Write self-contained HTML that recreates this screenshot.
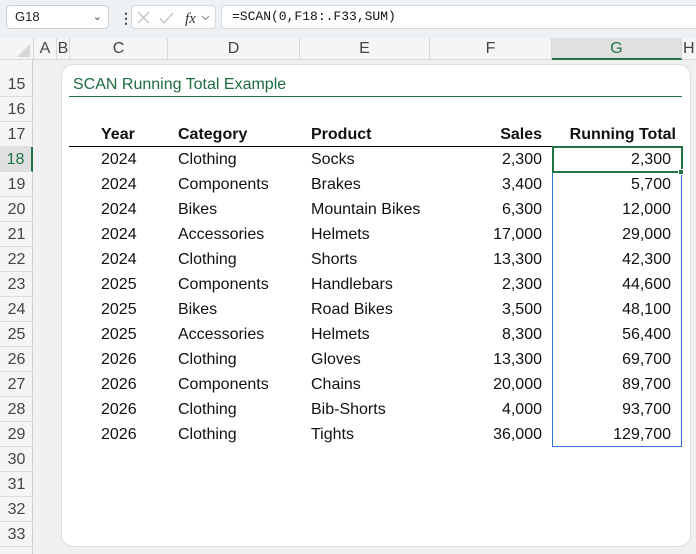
<!DOCTYPE html>
<html><head><style>
*{margin:0;padding:0;box-sizing:border-box}
body{width:696px;height:554px;background:#f0f0f0;font-family:"Liberation Sans",sans-serif;position:relative;overflow:hidden}
.a{position:absolute}
.t{position:absolute;font-size:16px;color:#111;line-height:25px;white-space:nowrap}
.r{text-align:right}
.b{font-weight:bold}
.rh{position:absolute;left:0;width:33px;height:25px;line-height:25px;text-align:center;font-size:16px;color:#444;border-bottom:1px solid #dcdcdc}
.ch{position:absolute;top:38px;height:22px;line-height:22px;text-align:center;font-size:16px;color:#444;border-right:1px solid #d8d8d8}
</style></head><body>
<div class="a" style="left:0;top:0;width:696px;height:37px;background:#eef1f4"></div>
<div class="a" style="left:6px;top:5px;width:103px;height:24px;background:#fff;border:1px solid #d0d0d0;border-radius:4px;font-size:13px;line-height:22px;padding-left:8px;color:#222">G18<span style="position:absolute;right:6px;top:0;font-size:11px;color:#444">&#8964;</span></div>
<div class="a" style="left:119px;top:10px;font-size:14px;color:#444;font-weight:bold">&#8942;</div>
<div class="a" style="left:131px;top:5px;width:85px;height:24px;background:#fff;border:1px solid #d8d8d8;border-radius:4px">
<svg width="85" height="24" style="position:absolute;left:0;top:0"><path d="M6 6l11 11M17 6L6 17" stroke="#bbb" stroke-width="1.2" fill="none"/><path d="M28 12l4 5l9-10" stroke="#bbb" stroke-width="1.2" fill="none"/><text x="53" y="17" font-family="Liberation Serif" font-style="italic" font-size="15" fill="#333">fx</text><path d="M70 10l3.5 3.5l3.5-3.5" stroke="#888" fill="none"/></svg></div>
<div class="a" style="left:221px;top:5px;width:480px;height:24px;background:#fff;border:1px solid #d8d8d8;border-radius:4px;font-family:'Liberation Mono',monospace;font-size:13px;line-height:22px;padding-left:10px;color:#111">=SCAN(0,F18:.F33,SUM)</div>
<div class="a" style="left:0;top:38px;width:696px;height:22px;background:#f5f5f5;border-bottom:1px solid #d8d8d8"></div>
<svg class="a" style="left:14px;top:42px" width="18" height="16"><path d="M16 2V15H3Z" fill="#d6d6d6"/></svg>
<div class="ch" style="left:33px;width:24px;border-left:1px solid #d8d8d8">A</div>
<div class="ch" style="left:57px;width:13px">B</div>
<div class="ch" style="left:70px;width:98px">C</div>
<div class="ch" style="left:168px;width:132px">D</div>
<div class="ch" style="left:300px;width:130px">E</div>
<div class="ch" style="left:430px;width:122px">F</div>
<div class="ch" style="left:552px;width:130px;background:#e0e0e0;color:#217346;border-bottom:2px solid #217346">G</div>
<div class="ch" style="left:682px;width:20px;text-align:left;padding-left:1px">H</div>
<div class="a" style="left:0;top:60px;width:33px;height:494px;background:#f5f5f5;border-right:1px solid #cfcfcf"></div>
<div class="a" style="left:61px;top:64px;width:630px;height:483px;background:#fff;border:1px solid #dcdcdc;border-radius:12px"></div>
<div class="rh" style="top:72px">15</div><div class="rh" style="top:97px">16</div><div class="rh" style="top:122px">17</div>
<div class="rh" style="top:147px;background:#e0e0e0;color:#217346;border-right:2px solid #217346">18</div>
<div class="rh" style="top:172px">19</div><div class="rh" style="top:197px">20</div><div class="rh" style="top:222px">21</div><div class="rh" style="top:247px">22</div><div class="rh" style="top:272px">23</div><div class="rh" style="top:297px">24</div><div class="rh" style="top:322px">25</div><div class="rh" style="top:347px">26</div><div class="rh" style="top:372px">27</div><div class="rh" style="top:397px">28</div><div class="rh" style="top:422px">29</div><div class="rh" style="top:447px">30</div><div class="rh" style="top:472px">31</div><div class="rh" style="top:497px">32</div><div class="rh" style="top:522px">33</div>
<div class="t" style="left:73px;top:72px;color:#1d6b3f">SCAN Running Total Example</div>
<div class="a" style="left:69px;top:96px;width:613px;height:1px;background:#217346"></div>
<div class="t b" style="left:101px;top:122px">Year</div>
<div class="t b" style="left:178px;top:122px">Category</div>
<div class="t b" style="left:311px;top:122px">Product</div>
<div class="t b r" style="left:440px;width:102px;top:122px">Sales</div>
<div class="t b r" style="left:552px;width:124px;top:122px">Running Total</div>
<div class="a" style="left:69px;top:146px;width:483px;height:1px;background:#000"></div>
<div class="a" style="left:552px;top:147px;width:130px;height:300px;border:1px solid #2e6fd1"></div>
<div class="a" style="left:552px;top:146px;width:131px;height:27px;border:2px solid #217346"></div>
<div class="a" style="left:678px;top:169px;width:6px;height:6px;background:#217346;border:1px solid #fff"></div>
<div id="d"></div>
<script>
var rows=[["2024","Clothing","Socks","2,300","2,300"],["2024","Components","Brakes","3,400","5,700"],["2024","Bikes","Mountain Bikes","6,300","12,000"],["2024","Accessories","Helmets","17,000","29,000"],["2024","Clothing","Shorts","13,300","42,300"],["2025","Components","Handlebars","2,300","44,600"],["2025","Bikes","Road Bikes","3,500","48,100"],["2025","Accessories","Helmets","8,300","56,400"],["2026","Clothing","Gloves","13,300","69,700"],["2026","Components","Chains","20,000","89,700"],["2026","Clothing","Bib-Shorts","4,000","93,700"],["2026","Clothing","Tights","36,000","129,700"]];
var h="";rows.forEach(function(r,i){var y=147+i*25;
h+='<div class="t" style="left:101px;top:'+y+'px">'+r[0]+'</div><div class="t" style="left:178px;top:'+y+'px">'+r[1]+'</div><div class="t" style="left:311px;top:'+y+'px">'+r[2]+'</div><div class="t r" style="left:440px;width:102px;top:'+y+'px">'+r[3]+'</div><div class="t r" style="left:552px;width:119px;top:'+y+'px">'+r[4]+'</div>';});
document.getElementById("d").innerHTML=h;
</script>
</body></html>
